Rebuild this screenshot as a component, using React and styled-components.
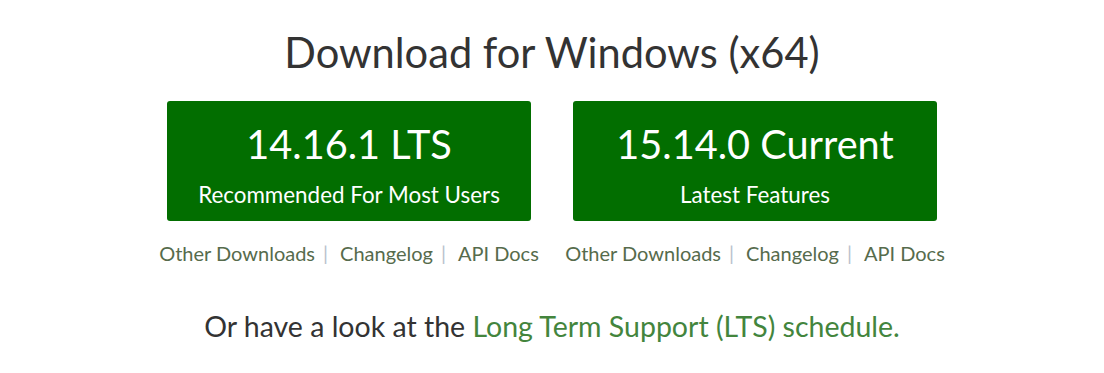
import React from "react";
import styled, { createGlobalStyle } from "styled-components";

const Global = createGlobalStyle`
  html, body { margin: 0; padding: 0; background: #fff; }
  body { font-family: "Lato", "Open Sans", sans-serif; color: #333; }
`;

const Page = styled.main`
  display: flex;
  flex-direction: column;
  align-items: center;
  padding-top: 28px;
`;

const Title = styled.h1`
  margin: 0;
  font-size: 41.6px;
  font-weight: 400;
  line-height: 48px;
  color: #333;
`;

const Columns = styled.div`
  display: flex;
  gap: 42px;
  margin-top: 25px;
`;

const Column = styled.div`
  width: 364px;
  display: flex;
  flex-direction: column;
  align-items: center;
`;

const DownloadButton = styled.a`
  box-sizing: border-box;
  width: 364px;
  height: 120px;
  padding-top: 18px;
  display: flex;
  flex-direction: column;
  align-items: center;
  background: #026e00;
  border-radius: 3px;
  color: #fff;
  text-decoration: none;
`;

const Version = styled.span`
  font-size: 39.7px;
  line-height: 50px;
`;

const Subtitle = styled.span`
  margin-top: 12px;
  font-size: 22.4px;
  line-height: 28px;
`;

const LinkRow = styled.div`
  display: flex;
  align-items: center;
  flex-shrink: 0;
  white-space: nowrap;
  margin-top: 18px;
  font-size: 20px;
  line-height: 28px;
`;

const SmallLink = styled.a`
  color: #566b4c;
  text-decoration: none;
`;

const Sep = styled.span`
  color: #b9c2cc;
  padding: 0 12px 0 8px;
`;

const Footer = styled.p`
  margin: 41px 0 0;
  font-size: 28.5px;
  line-height: 36px;
  color: #333;
`;

const GreenLink = styled.a`
  color: #43853d;
  text-decoration: none;
`;

const releases = [
  { version: "14.16.1 LTS", sub: "Recommended For Most Users" },
  { version: "15.14.0 Current", sub: "Latest Features" },
];

export default function App() {
  return (
    <>
      <Global />
      <Page>
        <Title>Download for Windows (x64)</Title>
        <Columns>
          {releases.map((r) => (
            <Column key={r.version}>
              <DownloadButton href="#">
                <Version>{r.version}</Version>
                <Subtitle>{r.sub}</Subtitle>
              </DownloadButton>
              <LinkRow>
                <SmallLink href="#">Other Downloads</SmallLink>
                <Sep>|</Sep>
                <SmallLink href="#">Changelog</SmallLink>
                <Sep>|</Sep>
                <SmallLink href="#">API Docs</SmallLink>
              </LinkRow>
            </Column>
          ))}
        </Columns>
        <Footer>
          Or have a look at the <GreenLink href="#">Long Term Support (LTS) schedule.</GreenLink>
        </Footer>
      </Page>
    </>
  );
}
